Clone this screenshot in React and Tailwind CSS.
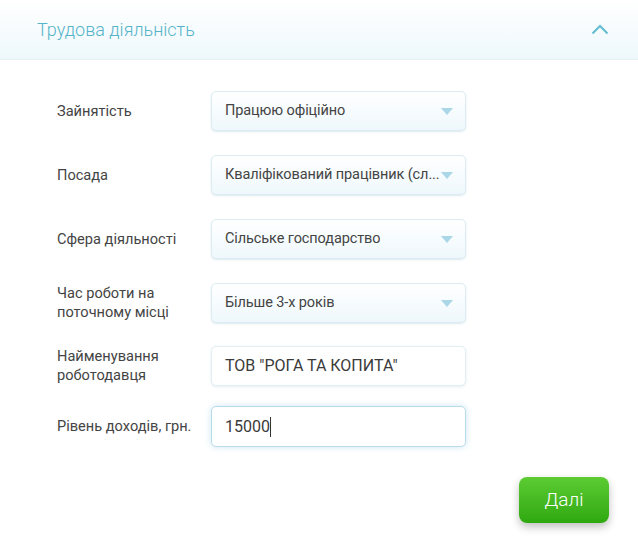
const rows = [
  { label: "Зайнятість", value: "Працюю офіційно", type: "select" },
  { label: "Посада", value: "Кваліфікований працівник (сл...", type: "select" },
  { label: "Сфера діяльності", value: "Сільське господарство", type: "select" },
  { label: "Час роботи на поточному місці", value: "Більше 3-х років", type: "select" },
];

const Arrow = () => (
  <svg width="12" height="7" viewBox="0 0 12 7" className="shrink-0">
    <path d="M0 0 L12 0 L6 7 Z" fill="#a9d7e8" />
  </svg>
);

const SelectBox = ({ value }) => (
  <div className="w-[255px] h-[40px] flex items-center justify-between gap-[2px] pl-[13px] pr-[12px] rounded-[5px] border border-[#dcecf2] bg-gradient-to-b from-white to-[#eef8fc] shadow-[0_1px_2px_rgba(120,170,190,0.25)]">
    <span className="min-w-0 text-[14.5px] tracking-[-0.1px] text-[#444] whitespace-nowrap overflow-hidden">{value}</span>
    <Arrow />
  </div>
);

const App = () => {
  return (
    <div className="w-[638px] h-[537px] bg-white font-['Roboto',sans-serif] flex flex-col">
      <div className="h-[60px] flex items-center justify-between pl-[37px] pr-[29px] bg-gradient-to-b from-white to-[#eef8fc] border-b border-[#e3f1f6]">
        <span className="text-[18px] font-light text-[#55b4c9]">Трудова діяльність</span>
        <svg width="18" height="11" viewBox="0 0 18 11">
          <path d="M1.5 9.5 L9 2 L16.5 9.5" fill="none" stroke="#62bcd0" strokeWidth="2" />
        </svg>
      </div>

      <div className="pl-[57px] pt-[31px] flex flex-col">
        {rows.map((row) => (
          <div key={row.label} className="flex items-center h-[40px] mb-[24px]">
            <div className="w-[154px] pr-[12px] text-[14.6px] leading-[19px] text-[#444]">{row.label}</div>
            <SelectBox value={row.value} />
          </div>
        ))}

        <div className="flex items-center h-[40px] -mt-[1px]">
          <div className="w-[154px] pr-[12px] text-[14.6px] leading-[19px] text-[#444]">Найменування роботодавця</div>
          <div className="w-[255px] h-[40px] flex items-center pl-[13px] rounded-[5px] border border-[#e3eff4] bg-white shadow-[0_1px_3px_rgba(120,170,190,0.2)]">
            <span className="text-[16px] text-[#3a3a3a]">ТОВ "РОГА ТА КОПИТА"</span>
          </div>
        </div>

        <div className="flex items-center h-[41px] mt-[20px]">
          <div className="w-[154px] pr-[12px] text-[14.6px] leading-[19px] text-[#444]">Рівень доходів, грн.</div>
          <div className="w-[255px] h-[41px] flex items-center pl-[13px] rounded-[5px] border border-[#b9dcec] bg-white shadow-[0_0_6px_rgba(140,200,225,0.45)]">
            <span className="text-[16px] text-[#3a3a3a]">15000</span>
            <span className="w-px h-[20px] bg-[#333]"></span>
          </div>
        </div>

        <div className="flex justify-end pr-[29px] mt-[30px]">
          <button className="w-[90px] h-[46px] rounded-[8px] bg-gradient-to-b from-[#5ccc32] to-[#2ea80f] text-white text-[19px] font-light shadow-[0_4px_8px_rgba(0,0,0,0.25)]">
            Далі
          </button>
        </div>
      </div>
    </div>
  );
};

export default App;
